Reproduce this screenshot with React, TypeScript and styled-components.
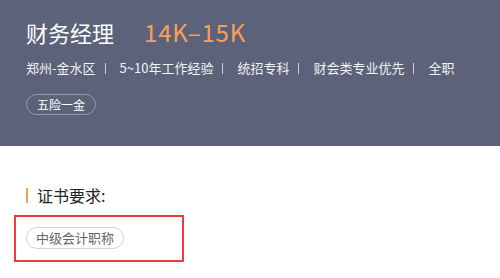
import styled, { createGlobalStyle } from "styled-components";

const GlobalStyle = createGlobalStyle`
    html, body {
        margin: 0;
        padding: 0;
        background: #fff;
        font-family: "Noto Sans CJK SC", "Noto Sans", sans-serif;
    }
`;

const Header = styled.header`
    background-color: #5b6279;
    height: 146px;
    box-sizing: border-box;
    padding: 17px 26px 0;
`;

const TitleRow = styled.div`
    display: flex;
    align-items: baseline;
    gap: 30px;
    height: 30px;
`;

const Title = styled.h1`
    margin: 0;
    font-size: 22px;
    font-weight: 400;
    color: #fff;
    line-height: 30px;
`;

const Salary = styled.span`
    font-size: 24px;
    letter-spacing: 0.8px;
    color: #f7a05a;
    line-height: 30px;
`;

const InfoList = styled.ul`
    list-style: none;
    margin: 12px 0 0;
    padding: 0;
    display: flex;
    align-items: center;
    height: 18px;
`;

const InfoItem = styled.li`
    font-size: 13px;
    color: #f2f3f6;
    line-height: 18px;
    display: flex;
    align-items: center;

    &:not(:last-child)::after {
        content: "";
        width: 1px;
        height: 11px;
        background: #c9ccd6;
        margin: 0 14px 0 9px;
    }
`;

const TagRow = styled.div`
    display: flex;
    gap: 8px;
    margin-top: 17px;
`;

const Tag = styled.span<{ $dark?: boolean }>`
    display: inline-flex;
    align-items: center;
    box-sizing: border-box;
    height: ${p => (p.$dark ? "21px" : "22px")};
    padding: 0 ${p => (p.$dark ? "10px" : "9px")};
    border-radius: 11px;
    font-size: ${p => (p.$dark ? "12px" : "13px")};
    color: ${p => (p.$dark ? "#fff" : "#666")};
    border: 1px solid ${p => (p.$dark ? "rgba(255,255,255,0.35)" : "#d2d2d2")};
`;

const Section = styled.section`
    padding: 38px 14px 0;
`;

const SectionTitle = styled.h2`
    margin: 0 0 0 12px;
    font-size: 16px;
    font-weight: 400;
    color: #222;
    line-height: 22px;
    display: flex;
    align-items: center;
    gap: 9px;

    &::before {
        content: "";
        width: 2px;
        height: 15px;
        background: #f7a05a;
    }
`;

const Highlight = styled.div`
    margin-top: 9px;
    width: 170px;
    height: 47px;
    box-sizing: border-box;
    border: 2px solid #f5383a;
    padding: 7px 10px 0;
`;

const jobInfo = ["郑州-金水区", "5~10年工作经验", "统招专科", "财会类专业优先", "全职"];

export default function App() {
    return (
        <>
            <GlobalStyle />
            <Header>
                <TitleRow>
                    <Title>财务经理</Title>
                    <Salary>14K–15K</Salary>
                </TitleRow>
                <InfoList>
                    {jobInfo.map(item => (
                        <InfoItem key={item}>{item}</InfoItem>
                    ))}
                </InfoList>
                <TagRow>
                    <Tag $dark>五险一金</Tag>
                </TagRow>
            </Header>
            <Section>
                <SectionTitle>证书要求:</SectionTitle>
                <Highlight>
                    <Tag>中级会计职称</Tag>
                </Highlight>
            </Section>
        </>
    );
}
